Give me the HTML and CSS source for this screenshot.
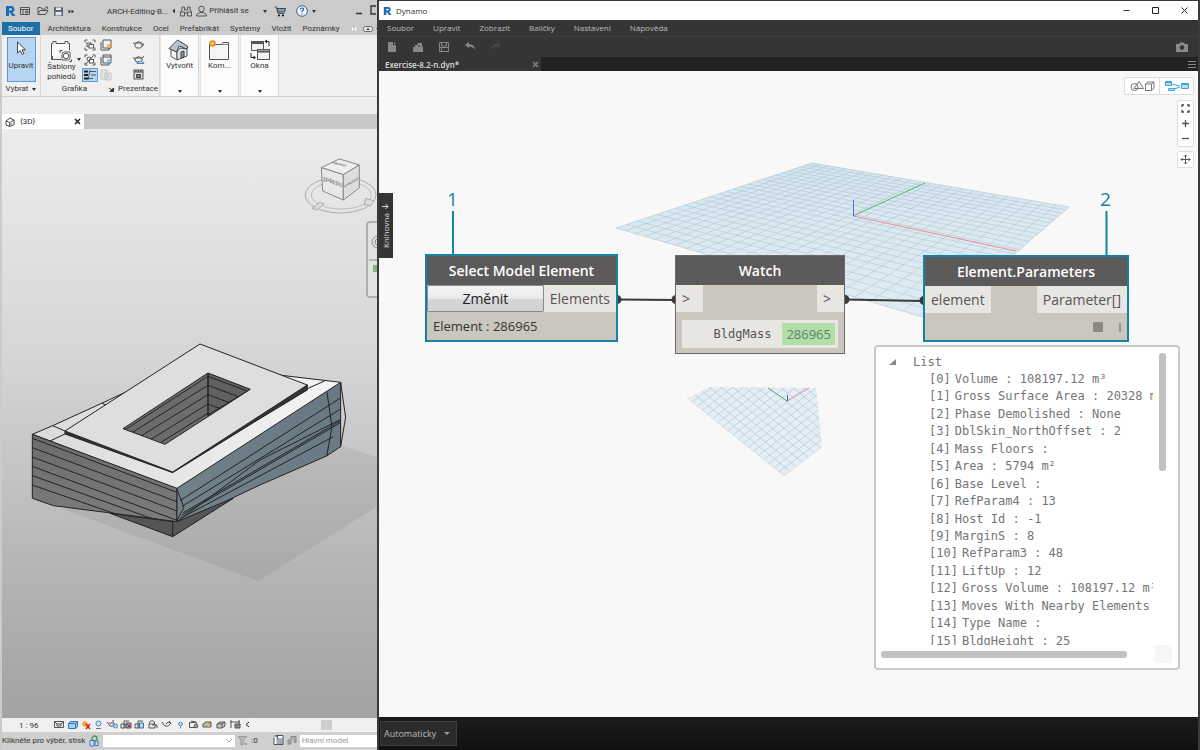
FILE: index.html
```
<!DOCTYPE html>
<html lang="cs">
<head>
    <meta charset="UTF-8">
    <meta name="viewport" content="width=device-width, initial-scale=1.0">
    <title>Dynamo</title>
    <link rel="stylesheet" href="styles.css">
</head>
<body>
  <section class="revit">
    <header class="revit-title">
      <svg class="logo" width="11" height="12" viewBox="0 0 11 12"><path d="M1 1h5.500a3.200 3.200 0 0 1 1 6.200L10.500 11H7.200L4.800 7.500H4V11H1zM4 3.200v2.200h2a1.100 1.100 0 0 0 0-2.200z" fill="#1b6db0"/></svg>
      <button aria-label="Domů"><svg width="10" height="10" viewBox="0 0 10 10"><path d="M.5 1.500h9v7h-9zM.5 3.500h9M2 5h2M2 7h2M5.500 5h2.500v2H5.500z" class="ln"/></svg></button>
      <button class="open" aria-label="Otevřít"><svg width="12" height="10" viewBox="0 0 12 10"><path d="M1 8.500v-7h3l1 1.500h3.500v1.500M1 8.500l2-4h8l-2.500 4zM8 1h2.500v2" class="ln"/></svg></button>
      <button aria-label="Uložit"><svg width="11" height="11" viewBox="0 0 11 11"><path d="M1 1h8l1 1v8H1z" fill="#5d6673"/><path d="M3 1.500h5V4H3zM2.500 6h6v3.500h-6z" fill="#e4e4e4"/></svg></button>
      <button aria-label="Více"><svg width="7" height="7" viewBox="0 0 7 7"><path d="M.5 1.500l2.500 2-2.500 2zM3.500 1.500l2.500 2-2.500 2z" fill="#333"/></svg></button>
      <span class="doc-name">ARCH-Editing-B...</span>
      <svg width="4" height="8" viewBox="0 0 4 8"><path d="M3 1.500v5L.5 4z" fill="#333"/></svg>
      <button aria-label="Hledat"><svg width="12" height="11" viewBox="0 0 12 11"><path d="M2 1h2.500v3H7.500V1H10v3l1.500 2v4H7.500V7h-3v3H.5V6L2 4zM.5 6h4v2M11.500 6h-4v2" class="ln"/></svg></button>
      <button class="sign-in"><svg width="11" height="12" viewBox="0 0 11 12"><circle cx="5.500" cy="4" r="2.800" class="ln"/><path d="M.7 11V9.500L4 7.500h3l3.300 2V11z" class="ln"/></svg>Přihlásit se</button>
      <i class="caret"></i>
      <button class="cart" aria-label="Obchod"><svg width="12" height="11" viewBox="0 0 12 11"><path d="M.5 1h2L4 7.500h6.500" class="ln"/><path d="M3 2.500h8.500L10.500 6H4z" fill="#71a5cd" stroke="#444"/><circle cx="5" cy="9.500" r="1"/><circle cx="9" cy="9.500" r="1"/></svg></button>
      <button class="help" aria-label="Nápověda"><svg width="12" height="12" viewBox="0 0 12 12"><circle cx="6" cy="6" r="5.300" fill="#f4f7fa" stroke="#3f5f80"/><path d="M4.300 4.600q.2-1.700 1.800-1.600 1.700.2 1.500 1.600-.2.900-1.600 1.600v1M6 8.200v1.200" fill="none" stroke="#2266a8" stroke-width="1.200"/></svg></button>
      <i class="caret"></i>
      <span class="win"><svg width="22" height="10" viewBox="0 0 22 10"><path d="M1 8.500h6M21 1h-5v8h5" fill="none" stroke="#333" stroke-width="1.300"/></svg></span>
    </header>
    <nav class="revit-tabs">
      <a href="#" class="active">Soubor</a>
      <a href="#">Architektura</a>
      <a href="#">Konstrukce</a>
      <a href="#">Ocel</a>
      <a href="#">Prefabrikát</a>
      <a href="#">Systémy</a>
      <a href="#">Vložit</a>
      <a href="#">Poznámky</a>
      <svg class="tabs-more" width="30" height="8" viewBox="0 0 30 8"><path d="M1 2l2 2-2 2zM4 2l2 2-2 2z" fill="#fff"/><rect x="12.500" y="1.500" width="9" height="5" rx="2" fill="#eee" stroke="#667"/><path d="M15 5l2-2 2 2zM25 3h4l-2 2.500z" fill="#333"/></svg>
    </nav>
    <div class="ribbon">
      <div class="panel panel-pick">
        <button class="big selected"><svg width="16" height="18" viewBox="0 0 16 18"><path d="M4.500 2v11l2.700-2.500 2 4 1.800-1-2-3.700h3.500z" fill="#fff" stroke="#444"/></svg>Upravit</button>
        <span class="panel-name">Vybrat <i class="caret"></i></span>
      </div>
      <div class="panel panel-gfx">
        <div class="tools">
          <button class="big"><svg width="22" height="22" viewBox="0 0 22 22"><path d="M1.500 19.500v-16h1.500V1.500h3v2h9v-2h3v2h1.500V10M1.500 19.500H11" fill="#f9f9f9" stroke="#555"/><path d="M1.500 4v1M2.500 16v3.500" stroke="#555"/><path d="M14.500 12H20v5.500q0 2.500-2.500 2.500H12v-5.500q0-2.500 2.500-2.500z" fill="#fff" stroke="#555"/><circle cx="16" cy="16" r="2.700" fill="none" stroke="#555"/><path d="M10 10.500h2.500M10 10.500v2.500M19.500 21.500h2v-2" fill="none" stroke="#444"/></svg>Šablony<br>pohledů</button>
          <i class="caret"></i>
          <div class="small-tools">
            <button aria-label="Viditelnost"><svg width="12" height="12" viewBox="0 0 12 12"><path d="M1 3.500V1h2.500M8.500 1H11v2.500M1 8.500V11h2.500M8.500 11H11V8.500" class="ln"/><rect x="3" y="4" width="4" height="3.500" class="ln"/><rect x="5" y="5.500" width="4.500" height="3.500" fill="#fff" stroke="#555"/></svg></button>
            <button aria-label="Filtry"><svg width="12" height="12" viewBox="0 0 12 12"><path d="M3 1h8v8H3zM1 3v8h8V9" class="ln"/><circle cx="9" cy="7" r="2" fill="#f2b33b"/><path d="M8.500 9.500h1.500" stroke="#555"/></svg></button>
            <button aria-label="Tenké čáry"><svg width="12" height="12" viewBox="0 0 12 12"><path d="M1 3.500V1h2.500M8.500 1H11v2.500M1 8.500V11h2.500M8.500 11H11V8.500" class="ln"/><circle cx="5" cy="5" r="2" class="ln"/><rect x="5.500" y="5.500" width="4" height="3.500" fill="#fff" stroke="#555"/><path d="M2 10l7-8" stroke="#555"/></svg></button>
            <button aria-label="Skryté čáry"><svg width="12" height="12" viewBox="0 0 12 12"><path d="M3 1h8v8H3zM1 3v8h8V9M3 3h8" class="ln"/><circle cx="9" cy="7" r="2" fill="#8dbbe5"/></svg></button>
            <button class="selected" aria-label="Řez"><svg width="14" height="12" viewBox="0 0 14 12"><path d="M1 2.500h4M1 6h4M1 9.500h4" stroke="#222" stroke-width="2"/><path d="M6 2.500h7M8 6h5M6 9.500h4M7 1L5 11" class="ln"/></svg></button>
            <button aria-label="Profil"><svg width="12" height="12" viewBox="0 0 12 12"><path d="M1 1h6v9H1zM5 4h6v7H5zM7 6h2M7 8h2" fill="#e6e6e6" stroke="#c4c4c4"/></svg></button>
          </div>
        </div>
        <span class="panel-name">Grafika <svg width="5" height="5" viewBox="0 0 5 5"><path d="M0 1l3 2M4.500 1v3.500H1z" fill="#333" stroke="#333"/></svg></span>
      </div>
      <div class="panel panel-render">
        <div class="pots">
          <button aria-label="Rendrovat"><svg width="13" height="11" viewBox="0 0 13 11"><path d="M3 4h7q.5 4-1.500 5h-4Q2.500 8 3 4zM3 5L1 3.500M10 5.500q2.500-1 1.500 0-.5 1.500-2 2M4 4l2.500-1.500L9 4" class="ln"/></svg></button>
          <button aria-label="Rendrovat v cloudu"><svg width="13" height="11" viewBox="0 0 13 11"><path d="M3 4h7q.5 3-1 4h-4Q2.500 8 3 4zM3 5L1 3.500M4 4l2.500-1.500L9 4M10 4l2-2" class="ln"/><path d="M5 9.500q0-2 2-1.500 1-2 3 0 2 0 2 1.500z" fill="#d8ebfb" stroke="#3f83c3"/></svg></button>
          <button aria-label="Galerie"><svg width="11" height="11" viewBox="0 0 11 11"><rect x="1" y="1" width="9" height="9" fill="#ddd" stroke="#555"/><path d="M1 3h9M3 1v2M5.500 1v2M8 1v2" stroke="#444"/><path d="M3.500 5.500h4v3h-4z" fill="#777" stroke="#444"/></svg></button>
        </div>
        <span class="panel-name">Prezentace</span>
      </div>
      <div class="panel drop">
        <button class="big"><svg width="22" height="22" viewBox="0 0 22 22"><path d="M3 10l6 3v8l-6-3.500z" fill="#f5f5f5" stroke="#555"/><path d="M9 13l3-4 7 1v7l-10 4z" fill="#dde3e8" stroke="#555"/><path d="M1 9.500L9.500 1 20 7.500l-1 2.500L11 7l-2.500 6z" fill="#b8c5cf" stroke="#444"/><path d="M13 13l3-1v6l-3 1.200z" fill="#7d95a8" stroke="#444"/></svg>Vytvořit</button>
        <i class="caret"></i>
      </div>
      <div class="panel drop">
        <button class="big"><svg width="22" height="22" viewBox="0 0 22 22"><path d="M1.500 20.500v-15h12l1.500-2h5.500v17z" fill="#f3f5f7" stroke="#555"/><path d="M14 5.500h6.500" stroke="#888"/><circle cx="4.500" cy="4.500" r="2.300" fill="#fff2a0" stroke="#ef8a17" stroke-width="2"/></svg>Kom...</button>
        <i class="caret"></i>
      </div>
      <div class="panel drop">
        <button class="big"><svg width="22" height="22" viewBox="0 0 22 22"><rect x="2.500" y="2.500" width="12" height="9" fill="#f2f2f2" stroke="#555"/><path d="M2.500 4h12" stroke="#555" stroke-width="2"/><rect x="8.500" y="10.500" width="12" height="10" fill="#f2f2f2" stroke="#555"/><path d="M8.500 12.500h12" stroke="#555" stroke-width="2"/><path d="M17 2.500h3V7M6 18.500H2V14" fill="none" stroke="#222"/><path d="M18 .5v4l-2.500-2zM4.500 16.500v4l2.500-2z" fill="#222"/></svg>Okna</button>
        <i class="caret"></i>
      </div>
    </div>
    <div class="options-bar"></div>
    <div class="view-tabs">
      <div class="view-tab">
        <svg width="10" height="10" viewBox="0 0 10 10"><path d="M1 4l4-3 4 2v4.500L5 9.500 1 8z" fill="#fff" stroke="#444"/><path d="M1 4l3.500 1.500V9M4.500 5.500L9 3M6 6v2" class="ln"/></svg>
        <span>{3D}</span>
        <button aria-label="Zavřít"><svg width="7" height="7" viewBox="0 0 7 7"><path d="M1 1l5 5M6 1L1 6" stroke="#222" stroke-width="1.500"/></svg></button>
      </div>
    </div>

    <div class="view3d">
      <svg class="model" viewBox="2 129 375 589" preserveAspectRatio="xMinYMin slice">
        <defs>
          <linearGradient id="dark" x1="0" y1="0" x2="0" y2="1"><stop offset="0" stop-color="#6b6b6b"/><stop offset="1" stop-color="#7c7c7c"/></linearGradient>
          <linearGradient id="glass" x1="0" y1="1" x2="1" y2="0"><stop offset="0" stop-color="#72828b"/><stop offset="1" stop-color="#667883"/></linearGradient>
          <linearGradient id="roof" x1="0" y1="0" x2="1" y2="0"><stop offset="0" stop-color="#dadada"/><stop offset="1" stop-color="#f4f4f4"/></linearGradient>
          <clipPath id="pit"><path d="M564 129L691 178 435 343 309 296z"/></clipPath>
          <clipPath id="east"><path d="M474 482L962 160V350L920 378 720 465 610 517 474 574z"/></clipPath>
        </defs>
        <!-- building mass -->
        <g transform="translate(20 330) scale(.3333)" stroke="#222" stroke-width="3" stroke-linejoin="round" fill="none">
          <path d="M130 538L715 753 1071 530V382L960 345z" fill="#000" fill-opacity=".06" stroke="none"/>
          <path d="M270 550L458 575 640 505 458 620z" fill="#555"/>
          <path d="M458 572V620"/>
          <path d="M37 313L98 287 245 220 335 178 540 120 785 136 962 157 962 165 471 478z" fill="url(#roof)"/>
          <path d="M98 287L135 303M245 220L262 226M90 333L135 312M862 176L914 153"/>
          <path d="M37 313L471 475V575L280 550 100 527 37 505z" fill="url(#dark)"/>
          <path d="M37 325L471 487M37 353L471 515M37 381L471 543M37 409L471 571M37 437L400 567M37 465L290 553"/>
          <path d="M471 475L962 157V350L920 378 720 465 610 517 471 575z" fill="url(#glass)"/>
          <g clip-path="url(#east)">
            <path d="M480 512L960 205M485 530L962 237M490 548L940 285 980 262M485 556L975 270M480 566L940 320M471 575L720 390 975 262M920 180L936 290 920 380"/>
          </g>
          <path d="M471 478L492 532 471 572M962 157L977 262 962 350"/>
          <path d="M135 303L458 426 862 165V180L700 278 458 428 135 312z" fill="#333"/>
          <path d="M540 42L862 165 458 426 135 303z" fill="#dedede"/>
          <path d="M564 129L691 178 435 343 309 296z" fill="#6c6c6c"/>
          <g clip-path="url(#pit)">
            <path d="M564 129L691 178 564 255z" fill="#606060"/>
            <path d="M564 129V258M300 309L564 139 700 190M300 330L564 166 700 217M300 357L564 194 700 245M320 373L564 222 700 273M340 388L564 250 640 280"/>
          </g>
        </g>
        <!-- view cube -->
        <g transform="translate(290 140) scale(.3333)" fill="none" stroke="#aaa" stroke-width="3">
          <ellipse cx="152" cy="165" rx="106" ry="54"/>
          <ellipse cx="154" cy="165" rx="90" ry="42" stroke-width="2"/>
          <path d="M66 205l24-18 12 5-22 18zM228 175l24 8-10 14-20-4z" fill="#ddd"/>
          <path d="M94 83L148 57 208 75 160 104z" fill="#eee" stroke="#888"/>
          <path d="M94 83L160 104V180L98 153z" fill="#e8e8e8" stroke="#888"/>
          <path d="M160 104L208 75V144L160 180z" fill="#ddd" stroke="#888"/>
          <g fill="#777" stroke="none" font-family="Roboto, sans-serif" font-weight="500">
            <text transform="matrix(1 .32 0 1 98 122)" font-size="16">ZPŘEDU</text>
            <text transform="matrix(1 -.6 0 1 163 144)" font-size="11">VPRAVO</text>
            <text transform="matrix(-1 -.28 .8 -.5 172 76)" font-size="13">SHORA</text>
          </g>
        </g>
        <g fill="none" stroke="#a0a0a0">
          <path d="M378 222h-8q-3 0-3 3v69q0 3 3 3h8" fill="#e2e2e2" stroke-width="1.500"/>
          <path d="M378 236a6 6 0 0 0 0 12M378 239a3 3 0 0 0 0 6M369 260h8" stroke="#888"/>
          <path d="M373 265h5v7h-5z" fill="#7eb57a" stroke="none"/>
        </g>
      </svg>
    </div>

    <div class="view-controls">
      <span class="scale">1 : 96</span>
      <svg width="202" height="12" viewBox="53 719 202 12" fill="none" stroke="#555">
        <path d="M54.500 721.500h9v6h-9zM55 722l2 2M63 722l-2 2M57 724h4v2h-4z"/>
        <path d="M68.500 723.500l2-2h7v5l-2 2h-7zM68.500 723.500h7v5M75.500 723.500l2-2" stroke="#2d77b8" fill="#a8d1ef"/>
        <path d="M85 721v6M82 724h6M83 722l4 4M87 722l-4 4" stroke="#f1a522" stroke-width="1.300"/><path d="M86 724l4 5M90 724l-4 5" stroke="#c22" stroke-width="1.500"/>
        <circle cx="98.500" cy="723.500" r="2.500" stroke="#3c87c9" fill="#dceefb"/><path d="M96 728.500h5" stroke="#777"/>
        <path d="M107 722l3 4h4v-3h-5M112 721h2"/><circle cx="115.500" cy="726" r="2" stroke="#3c87c9" fill="#bde"/>
        <path d="M121 724h4v4h-4zM124 721h5M124 721v7"/><path d="M126 723h5v5h-5z" fill="#7aaedc"/><path d="M127 724l4 4M131 724l-4 4" stroke="#c22"/>
        <path d="M135 724h4v4h-4zM138 721h5M138 721v7"/><path d="M139.500 723h4v5h-4z" fill="#b4d4ef" stroke="#3c77b0"/>
        <path d="M149.500 724v-2q2.500-3 5 0v2M149 724h6v4h-6zM152 725h5v3"/>
        <path d="M162 722l3 4h3l3-3-3-1-2 2M169 721l2 2"/>
        <circle cx="180.500" cy="724" r="1.800" stroke="#3c87c9" fill="#cbe5fa"/><path d="M180.500 726.500v2" stroke="#3c87c9"/>
        <path d="M189.500 722.500h7v5h-7zM191 721l5 1"/><circle cx="196" cy="726" r="1.800" fill="#aaa"/>
        <path d="M203 724l3-2h5v5h-8z" fill="#bbb"/><path d="M207 722l4 3-3 3" fill="#f0b94a" stroke="#a86"/>
        <path d="M217 724l3-2h5v4l-3 2h-5zM217 724h5v4M222 724l3-2" fill="#ccc"/>
        <path d="M230 722h10M231 720v8M239 720v4"/><path d="M235 724h5v4h-5z" fill="#888"/>
        <path d="M249 722l-3 2.500 3 2.500" stroke="#222"/>
      </svg>
      <span class="thumb"></span>
    </div>
    <footer class="status">
      <span>Klikněte pro výběr, stisk</span>
      <svg width="12" height="12" viewBox="0 0 12 12" fill="none"><circle cx="6.500" cy="3.500" r="2.500" stroke="#4a9a58" stroke-width="1.300"/><path d="M2 5.500h4V11H2zM7 6h3v4.500H7z" stroke="#3a75b0" fill="#cfe3f3"/></svg>
      <select class="workset" aria-label="Pracovní sada"><option></option></select>
      <svg width="10" height="11" viewBox="0 0 10 11"><path d="M.5 1.500h8L5 5.500v4L3 10V5.500z" fill="#bbb" stroke="#999"/><path d="M6 9h3" stroke="#777"/></svg>
      <span class="count">:0</span>
      <svg width="11" height="11" viewBox="0 0 11 11"><path d="M1 2.500v7h9v-9H3M3.500 4h6M3.500 6h6M3.500 8h6M1.500 1h3v3" fill="#fff" stroke="#456"/></svg>
      <svg width="10" height="11" viewBox="0 0 10 11"><path d="M1 5h3v4H1zM4 1.500h5v6H7M4 1.500V5" fill="#aaa" stroke="#888"/></svg>
      <input class="option-set" aria-label="Varianta návrhu" placeholder="Hlavní model">
    </footer>
  </section>

  <section class="dynamo">
    <header class="dyn-title">
      <svg width="9" height="10" viewBox="0 0 11 12"><path d="M1 1h5.500a3.200 3.200 0 0 1 1 6.200L10.500 11H7.200L4.800 7.500H4V11H1zM4 3.200v2.200h2a1.100 1.100 0 0 0 0-2.200z" fill="#1b6db0"/></svg>
      <h1>Dynamo</h1>
      <div class="win-buttons">
        <button aria-label="Minimalizovat"><svg width="9" height="9" viewBox="0 0 9 9"><path d="M1.500 4.500h6" stroke="#333"/></svg></button>
        <button aria-label="Maximalizovat"><svg width="9" height="9" viewBox="0 0 9 9"><path d="M1.500 1.500h6v6h-6z" fill="none" stroke="#222"/></svg></button>
        <button aria-label="Zavřít"><svg width="9" height="9" viewBox="0 0 9 9"><path d="M1.500 1.500l6 6M7.500 1.500l-6 6" stroke="#222"/></svg></button>
      </div>
    </header>
    <nav class="dyn-menu">
      <a href="#">Soubor</a>
      <a href="#">Upravit</a>
      <a href="#">Zobrazit</a>
      <a href="#">Balíčky</a>
      <a href="#">Nastavení</a>
      <a href="#">Nápověda</a>
    </nav>
    <div class="dyn-tools">
      <button aria-label="Nový"><svg width="12" height="12" viewBox="0 0 12 12"><path d="M2 1h5v3h3v7H2zM8 1l2 2H8z" fill="#888"/></svg></button>
      <button aria-label="Otevřít"><svg width="12" height="12" viewBox="0 0 12 12"><path d="M1 6h2V4h2l1-2h4v3l1 1v5H1z" fill="#888"/><path d="M6 5h2" stroke="#353535"/></svg></button>
      <button aria-label="Uložit"><svg width="12" height="12" viewBox="0 0 12 12"><path d="M1.500 1.500h9v9h-9zM3.500 1.500V5h5V1.500M1.500 6.500h9M3.500 7v3" fill="none" stroke="#888"/></svg></button>
      <button aria-label="Zpět"><svg width="12" height="12" viewBox="0 0 12 12"><path d="M1 4l4-3v2q5 0 6.500 6Q9 5.500 5 5.500v1.500z" fill="#888"/></svg></button>
      <button aria-label="Znovu"><svg width="12" height="12" viewBox="0 0 12 12"><path d="M11 4L7 1v2Q2 3 .5 9 3 5.500 7 5.500v1.500z" fill="#484848"/></svg></button>
      <button class="camera" aria-label="Exportovat jako obrázek"><svg width="14" height="11" viewBox="0 0 14 11"><path d="M1 2h3l1-1.500h4L10 2h3v8H1z" fill="#8a8a8a"/><circle cx="7" cy="5.500" r="2.200" fill="#333"/></svg></button>
    </div>
    <div class="dyn-tabs">
      <div class="dyn-tab"><span>Exercise-8.2-n.dyn*</span><button aria-label="Zavřít kartu"><svg width="7" height="7" viewBox="0 0 7 7"><path d="M1 1l5 5M6 1L1 6" stroke="#888" stroke-width="1.300"/></svg></button></div>
      <button class="tab-list" aria-label="Seznam karet"><svg width="8" height="8" viewBox="0 0 8 8"><path d="M0 1.500h8M0 4.500h8M0 7.500h8" stroke="#888"/></svg></button>
    </div>

    <main class="canvas">
      <svg class="scene" width="819" height="646" viewBox="379 71 819 646">
        <defs>
          <clipPath id="cut"><path d="M687 398L710 387 816 388 822 447 784 476z"/></clipPath>
        </defs>
        <path d="M616 228L812 163 1069 207 937 321z" class="floor"/>
        <g id="grid-main"></g>
        <path d="M853 216L925 183" stroke="#5cb070"/>
        <path d="M853 216L1016 251" stroke="#f08a94"/>
        <path d="M853.500 216V200" stroke="#5a6af0"/>
        <path d="M687 398L710 387 816 388 822 447 784 476z" class="floor"/>
        <g id="grid-small" clip-path="url(#cut)"></g>
        <path d="M787 401L768 388" stroke="#5cb070"/>
        <path d="M787 401L809 388" stroke="#f08a94"/>
        <path d="M787.500 401v-6" stroke="#3a5ad0"/>
        <path d="M619 299.500L675 300M846 299.500L923 301" stroke="#3a3a3a" stroke-width="2"/>
        <path d="M617 295a4.500 4.500 0 0 1 0 9zM676 295a4.500 4.500 0 0 0 0 9zM845 295a4.500 4.500 0 0 1 0 9zM924 296a4.500 4.500 0 0 0 0 9z" fill="#3a3a3a"/>
        <path d="M453 211v44M1106.500 211v46" stroke="#0f86a0" stroke-width="2"/>
      </svg>

      <span class="callout callout-1">1</span>
      <span class="callout callout-2">2</span>

      <article class="node picked node-select">
        <h2>Select Model Element</h2>
        <div class="ports"><button class="change">Změnit</button><span class="port">Elements</span></div>
        <p class="picked-id">Element : 286965</p>
      </article>

      <article class="node node-watch">
        <h2>Watch</h2>
        <div class="ports"><span class="port">&gt;</span><span class="port">&gt;</span></div>
        <div class="watch-value"><span>BldgMass</span><b>286965</b></div>
      </article>

      <article class="node picked node-params">
        <h2>Element.Parameters</h2>
        <div class="ports"><span class="port">element</span><span class="port">Parameter[]</span></div>
        <div class="lacing"><i class="box"></i><i class="bar"></i></div>
      </article>

      <aside class="preview">
        <div class="preview-body">
          <div class="root"><svg width="8" height="8" viewBox="0 0 8 8"><path d="M7 1v6H0z" fill="#888"/></svg>List</div>
          <ul>
            <li><span>[0]</span>Volume : 108197.12 m³</li>
            <li><span>[1]</span>Gross Surface Area : 20328 m²</li>
            <li><span>[2]</span>Phase Demolished : None</li>
            <li><span>[3]</span>DblSkin_NorthOffset : 2</li>
            <li><span>[4]</span>Mass Floors :</li>
            <li><span>[5]</span>Area : 5794 m²</li>
            <li><span>[6]</span>Base Level :</li>
            <li><span>[7]</span>RefParam4 : 13</li>
            <li><span>[8]</span>Host Id : -1</li>
            <li><span>[9]</span>MarginS : 8</li>
            <li><span>[10]</span>RefParam3 : 48</li>
            <li><span>[11]</span>LiftUp : 12</li>
            <li><span>[12]</span>Gross Volume : 108197.12 m³</li>
            <li><span>[13]</span>Moves With Nearby Elements</li>
            <li><span>[14]</span>Type Name :</li>
            <li><span>[15]</span>BldgHeight : 25</li>
          </ul>
        </div>
        <div class="vbar"></div>
        <div class="hbar"></div>
        <div class="grip"></div>
      </aside>

      <button class="library">Knihovna <svg width="7" height="7" viewBox="0 0 7 7"><path d="M0 3.500h6M3.500 1L6 3.500 3.500 6" fill="none" stroke="#ddd"/></svg></button>

      <div class="view-switch">
        <button aria-label="Geometrie"><svg width="26" height="12" viewBox="0 0 26 12" fill="none" stroke="#777"><circle cx="5.500" cy="7" r="3.500"/><path d="M5 8.500L10 1.500l4.500 7zM16.500 4l2.500-2h6v6l-2.500 2.500h-6zM16.500 4h6v6.500M22.500 4L25 2"/></svg></button>
        <button aria-label="Graf"><svg width="26" height="12" viewBox="0 0 26 12" fill="#b9dff8" stroke="#3fa4e4"><path d="M7 4l9 2M10 9l6-2" fill="none"/><path d="M1.500 1.500h6v4h-6zM4.500 8.500h6v2h-6zM17.500 3.500h7v5h-7zM1.500 2.500h6M17.500 4.500h7"/></svg></button>
      </div>
      <div class="zoomers">
        <button aria-label="Přizpůsobit"><svg width="9" height="9" viewBox="0 0 9 9"><path d="M1 3V1h2M6 1h2v2M8 6v2H6M3 8H1V6" fill="none" stroke="#444" stroke-width="1.300"/></svg></button>
        <button aria-label="Přiblížit"><svg width="9" height="9" viewBox="0 0 9 9"><path d="M1 4.500h7M4.500 1v7" stroke="#555" stroke-width="1.300"/></svg></button>
        <button aria-label="Oddálit"><svg width="9" height="9" viewBox="0 0 9 9"><path d="M1 4.500h7" stroke="#555" stroke-width="1.300"/></svg></button>
      </div>
      <div class="panner">
        <button aria-label="Posun"><svg width="11" height="11" viewBox="0 0 11 11"><path d="M1 5.500h9M5.500 1v9M4 2.500l1.500-1.500L7 2.500M4 8.500L5.500 10 7 8.500M2.500 4L1 5.500 2.500 7M8.500 4L10 5.500 8.500 7" fill="none" stroke="#555"/></svg></button>
      </div>
    </main>

    <footer class="run-bar">
      <select class="run-mode" aria-label="Spuštění"><option>Automaticky</option></select>
    </footer>
  </section>
  <script src="grid.js"></script>
</body>
</html>
```
FILE: styles.css
```
*{
  box-sizing: border-box;
  margin: 0;
  padding: 0;
}
body {
  display: flex;
  height: 100vh;
  overflow: hidden;
  background: #222;
  font-family: "Open Sans", "Noto Sans", sans-serif;
  font-size: 8px;
  color: #333;
}
button {
  border: 0;
  background: none;
  font: inherit;
  color: inherit;
  line-height: 0;
}
a {
  color: inherit;
  text-decoration: none;
}
svg {
  flex: none;
}
.ln {
  fill: none;
  stroke: #555;
}
.caret {
  border: 2px solid transparent;
  border-top: 3px solid #333;
  border-bottom: 0;
}

/* Revit window */
.revit {
  display: flex;
  flex-direction: column;
  flex: 0 0 377px;
  min-width: 0;
  overflow: hidden;
  background: #cbcbcb;
  padding-left: 2px;
  font-family: Roboto, "Open Sans", sans-serif;
}
.revit-title {
  display: flex;
  align-items: center;
  gap: 4px;
  height: 22px;
  padding-left: 3px;
}
.open {
  margin-left: 3px;
}
.doc-name {
  margin-left: 28px;
}
.sign-in {
  display: flex;
  align-items: center;
  gap: 2px;
  line-height: 12px;
  margin-right: 10px;
}
.cart {
  margin-left: 3px;
}
.help {
  margin-left: 6px;
}
.win {
  margin-left: auto;
}
.revit-tabs {
  display: flex;
  align-items: center;
  gap: 11px;
  height: 13px;
  white-space: nowrap;
}
.revit-tabs a {
  line-height: 13px;
}
.revit-tabs .active {
  background: #1d6fa8;
  color: #fff;
  padding: 0 6px;
  margin-right: -3px;
}
.tabs-more {
  margin-left: auto;
}
.ribbon {
  display: flex;
  height: 62px;
  background: #f0f0f0;
  border-bottom: 1px solid #d0d0d0;
}
.panel {
  display: flex;
  flex-direction: column;
  align-items: center;
  justify-content: space-between;
  border-right: 1px solid #d6d6d6;
  padding: 2px 4px 0;
}
.panel-pick {
  width: 39px;
}
.panel-gfx {
  width: 76px;
  padding: 2px 3px 0 6px;
  border: 0;
}
.panel-render {
  width: 43px;
}
.panel-name {
  display: flex;
  align-items: center;
  gap: 4px;
  line-height: 14px;
  white-space: nowrap;
}
.panel-gfx .panel-name {
  align-self: flex-end;
  gap: 22px;
}
.big {
  display: flex;
  flex-direction: column;
  align-items: center;
  padding-top: 2px;
  line-height: 10px;
}
.panel-pick .big {
  width: 29px;
  height: 47px;
  gap: 2px;
  line-height: 12px;
}
.selected {
  background: #b5d5f3;
  border: 1px solid #5d9bd3;
}
.tools {
  display: flex;
  align-items: center;
  gap: 1px;
}
.small-tools {
  display: grid;
  grid-template-columns: 17px 15px;
  grid-auto-rows: 15px;
  align-items: center;
  justify-items: center;
}
.pots {
  display: flex;
  flex-direction: column;
  align-items: center;
  gap: 4px;
  padding-top: 2px;
}
.drop {
  width: 39px;
  background: #fbfbfb;
  margin-right: 1px;
  border-left: 1px solid #e2e2e2;
}
.drop .caret {
  margin-bottom: 3px;
}
.options-bar {
  height: 17px;
  background: #eee;
}
.view-tabs {
  height: 15px;
  background: #c8c8c8;
}
.view-tab {
  display: flex;
  align-items: center;
  gap: 5px;
  width: 82px;
  height: 15px;
  padding: 0 3px;
  background: #fff;
}
.view-tab button {
  margin-left: auto;
}
.view3d {
  flex: 1;
  min-height: 0;
  background: linear-gradient(#ececec, #d6d6d6 38%, #b2b2b2 78%, #a2a2a2);
}
.model {
  display: block;
  width: 100%;
  height: 100%;
}
.view-controls {
  display: flex;
  align-items: center;
  height: 14px;
  background: #f0f0f0;
}
.scale {
  width: 51px;
  padding-left: 17px;
  white-space: nowrap;
}
.thumb {
  width: 11px;
  height: 10px;
  margin-left: 66px;
  background: #cdcdcd;
}
.status {
  display: flex;
  align-items: center;
  gap: 3px;
  height: 18px;
  padding-bottom: 1px;
  background: #cfcfcf;
  white-space: nowrap;
}
.status select,
.status input {
  height: 12px;
  border: 0;
  border-radius: 0;
  background: #fff;
  font: inherit;
}
.status select {
  appearance: none;
  flex: none;
  width: 132px;
  background: #fff url("data:image/svg+xml,%3Csvg xmlns='http://www.w3.org/2000/svg' width='8' height='6'%3E%3Cpath d='M1 1l3 3 3-3' fill='none' stroke='%23aaa'/%3E%3C/svg%3E") no-repeat right 2px center;
}
.status .count {
  margin-right: 12px;
}
.status input {
  flex: 1;
  min-width: 0;
  padding: 0 2px;
}
.status input::placeholder {
  color: #999;
}

/* Dynamo window */
.dynamo {
  display: flex;
  flex-direction: column;
  flex: 1;
  min-width: 0;
  background: #353535;
  border: solid #3a3a3a;
  border-width: 1px 2px 0;
  color: #bdbdbd;
}
.dyn-title {
  display: flex;
  align-items: center;
  gap: 4px;
  height: 19px;
  padding: 0 9px 0 4px;
  background: #fff;
  color: #333;
}
.dyn-title h1 {
  font-size: 8px;
  font-weight: normal;
}
.win-buttons {
  display: flex;
  gap: 20px;
  margin-left: auto;
}
.dyn-menu {
  display: flex;
  gap: 19px;
  height: 17px;
  padding-left: 8px;
  line-height: 16px;
  border-bottom: 1px solid #3e3e3e;
}
.dyn-tools {
  display: flex;
  align-items: center;
  gap: 14px;
  height: 20px;
  padding: 0 9px 0 7px;
}
.camera {
  margin-left: auto;
}
.dyn-tabs {
  display: flex;
  align-items: center;
  justify-content: space-between;
  height: 14px;
  padding-right: 2px;
  background: #222;
}
.dyn-tab {
  display: flex;
  align-items: center;
  justify-content: space-between;
  width: 162px;
  height: 14px;
  padding: 0 2px 0 6px;
  background: #353535;
  color: #ddd;
  font-weight: 600;
}
.canvas {
  position: relative;
  flex: 1;
  min-height: 0;
  overflow: hidden;
  background: #f8f8f8;
}
.scene {
  position: absolute;
  left: 0;
  top: 0;
}
.floor {
  fill: #e3eef5;
}
.minor {
  stroke: #cddfe9;
  stroke-width: .3;
}
.major {
  stroke: #a9c3d2;
  stroke-width: .6;
}

/* nodes */
.callout {
  position: absolute;
  top: 116px;
  font-size: 19px;
  line-height: 24px;
  color: #0f86a0;
}
.callout-1 {
  left: 68px;
}
.callout-2 {
  left: 721px;
}
.node {
  position: absolute;
  background: #cbc6be;
  border: 1px solid #6a6a68;
  color: #555;
  font-size: 13px;
}
.picked {
  border: 2px solid #1482a0;
}
.node h2 {
  height: 29px;
  line-height: 29px;
  background: #5c5a5a;
  color: #fff;
  font-size: 14px;
  font-weight: 600;
  text-align: center;
}
.ports {
  display: flex;
  justify-content: space-between;
}
.port {
  height: 27px;
  padding: 0 6px;
  line-height: 27px;
  font-size: 14px;
  background: #e8e6e1;
}
.node-select {
  left: 46px;
  top: 183px;
  width: 193px;
  height: 88px;
}
.change {
  flex: 1;
  border: 1px solid #8a8a8a;
  border-radius: 2px;
  background: linear-gradient(#f5f5f5, #e9e9e9 50%, #d6d6d9 52%, #d2d2d5);
  color: #222;
  font-size: 14px;
  line-height: 25px;
}
.picked-id {
  padding-left: 6px;
  line-height: 29px;
  color: #333;
}
.node-watch {
  left: 296px;
  top: 184px;
  width: 170px;
  height: 99px;
}
.node-watch .port {
  width: 27px;
}
.watch-value {
  display: flex;
  align-items: center;
  justify-content: flex-end;
  gap: 11px;
  height: 28px;
  margin: 8px 6px 0;
  padding-right: 3px;
  background: #e8e6e1;
  font-family: "DejaVu Sans Mono", monospace;
  font-size: 12px;
}
.watch-value b {
  padding: 0 4px;
  line-height: 22px;
  background: #b0dfa9;
  color: #66806a;
  font-family: "Open Sans", sans-serif;
  font-size: 13px;
  font-weight: normal;
}
.node-params {
  left: 544px;
  top: 184px;
  width: 206px;
  height: 87px;
}
.lacing {
  display: flex;
  align-items: center;
  justify-content: flex-end;
  gap: 16px;
  height: 28px;
  padding-right: 6px;
}
.box {
  width: 10px;
  height: 10px;
  background: #8b8985;
}
.bar {
  width: 2px;
  height: 9px;
  background: #9a978f;
}

/* list bubble under the node */
.preview {
  position: absolute;
  left: 495px;
  top: 274px;
  display: grid;
  grid-template-columns: 1fr 8px;
  grid-template-rows: 292px 8px;
  gap: 6px 6px;
  width: 306px;
  height: 325px;
  padding: 6px 11px 0 5px;
  background: #fff;
  border: 2px solid #c9c9c9;
  border-radius: 4px;
  color: #757575;
  font-family: "DejaVu Sans Mono", monospace;
  font-size: 12px;
}
.preview-body {
  overflow: hidden;
  white-space: nowrap;
}
.root {
  display: flex;
  align-items: center;
  gap: 16px;
  height: 18px;
  padding-left: 8px;
}
.preview ul {
  display: grid;
  grid-auto-rows: 1fr;
  height: 279px;
  padding-left: 48px;
  list-style: none;
}
.preview li {
  display: flex;
  gap: 4px;
  line-height: 17px;
}
.vbar,
.hbar {
  background: #c1c1c1;
  border-radius: 3px;
}
.vbar {
  width: 7px;
  height: 118px;
}
.hbar {
  width: 246px;
  height: 7px;
}
.grip {
  position: absolute;
  right: 6px;
  bottom: 5px;
  width: 17px;
  height: 18px;
  background: #f6f6f6;
}

/* overlays on the canvas */
.library {
  position: absolute;
  left: 0;
  top: 122px;
  display: flex;
  align-items: center;
  justify-content: center;
  gap: 4px;
  width: 14px;
  height: 65px;
  background: #353535;
  color: #ddd;
  writing-mode: vertical-rl;
  line-height: 12px;
  transform: rotate(180deg);
}
.library svg {
  transform: rotate(180deg);
}
.view-switch,
.zoomers,
.panner {
  position: absolute;
  right: 4px;
  display: flex;
  background: #fff;
  border: 1px solid #dcdcdc;
  border-radius: 2px;
}
.view-switch {
  top: 6px;
}
.view-switch button {
  width: 34px;
  height: 16px;
}
.view-switch button + button {
  border-left: 1px solid #dcdcdc;
}
.zoomers {
  top: 29px;
  flex-direction: column;
  width: 17px;
}
.zoomers button {
  height: 15px;
}
.panner {
  top: 80px;
  width: 17px;
  height: 17px;
  align-items: center;
  justify-content: center;
}
.run-bar {
  display: flex;
  align-items: center;
  height: 33px;
  padding-left: 1px;
  background: linear-gradient(#1c1c1c, #101010);
}
.run-mode {
  appearance: none;
  width: 77px;
  height: 25px;
  padding-left: 3px;
  border: 1px solid #3c3c3c;
  background: #2b2b2b url("data:image/svg+xml,%3Csvg xmlns='http://www.w3.org/2000/svg' width='6' height='4'%3E%3Cpath d='M0 0h6L3 3z' fill='%23999'/%3E%3C/svg%3E") no-repeat right 6px center;
  color: #bbb;
  font-family: inherit;
  font-size: 9px;
}
```
FILE: grid.js
```
// maps u,v (0..1) onto a four-cornered floor seen in perspective
function project(q, u, v) {
  let [a, b, c, d] = q;
  let dx1 = b[0] - c[0], dx2 = d[0] - c[0], sx = a[0] - b[0] + c[0] - d[0];
  let dy1 = b[1] - c[1], dy2 = d[1] - c[1], sy = a[1] - b[1] + c[1] - d[1];
  let det = dx1 * dy2 - dx2 * dy1;
  let g = (sx * dy2 - dx2 * sy) / det;
  let h = (dx1 * sy - sx * dy1) / det;
  let w = g * u + h * v + 1;
  return [
    ((b[0] - a[0] + g * b[0]) * u + (d[0] - a[0] + h * d[0]) * v + a[0]) / w,
    ((b[1] - a[1] + g * b[1]) * u + (d[1] - a[1] + h * d[1]) * v + a[1]) / w
  ];
}

function drawGrid(id, q, count, step) {
  let minor = "", major = "";
  for (let i = 0; i <= count; i++) {
    let t = i / count;
    let line = "M" + project(q, t, 0) + "L" + project(q, t, 1) +
      "M" + project(q, 0, t) + "L" + project(q, 1, t);
    i % step == 0 ? major += line : minor += line;
  }
  document.getElementById(id).innerHTML =
    '<path class="minor" d="' + minor + '"/><path class="major" d="' + major + '"/>';
}

drawGrid("grid-main", [[616, 228], [812, 163], [1069, 207], [937, 321]], 100, 4);
drawGrid("grid-small", [[687, 398], [784, 476], [900, 388], [803, 310]], 19, 1);
```
